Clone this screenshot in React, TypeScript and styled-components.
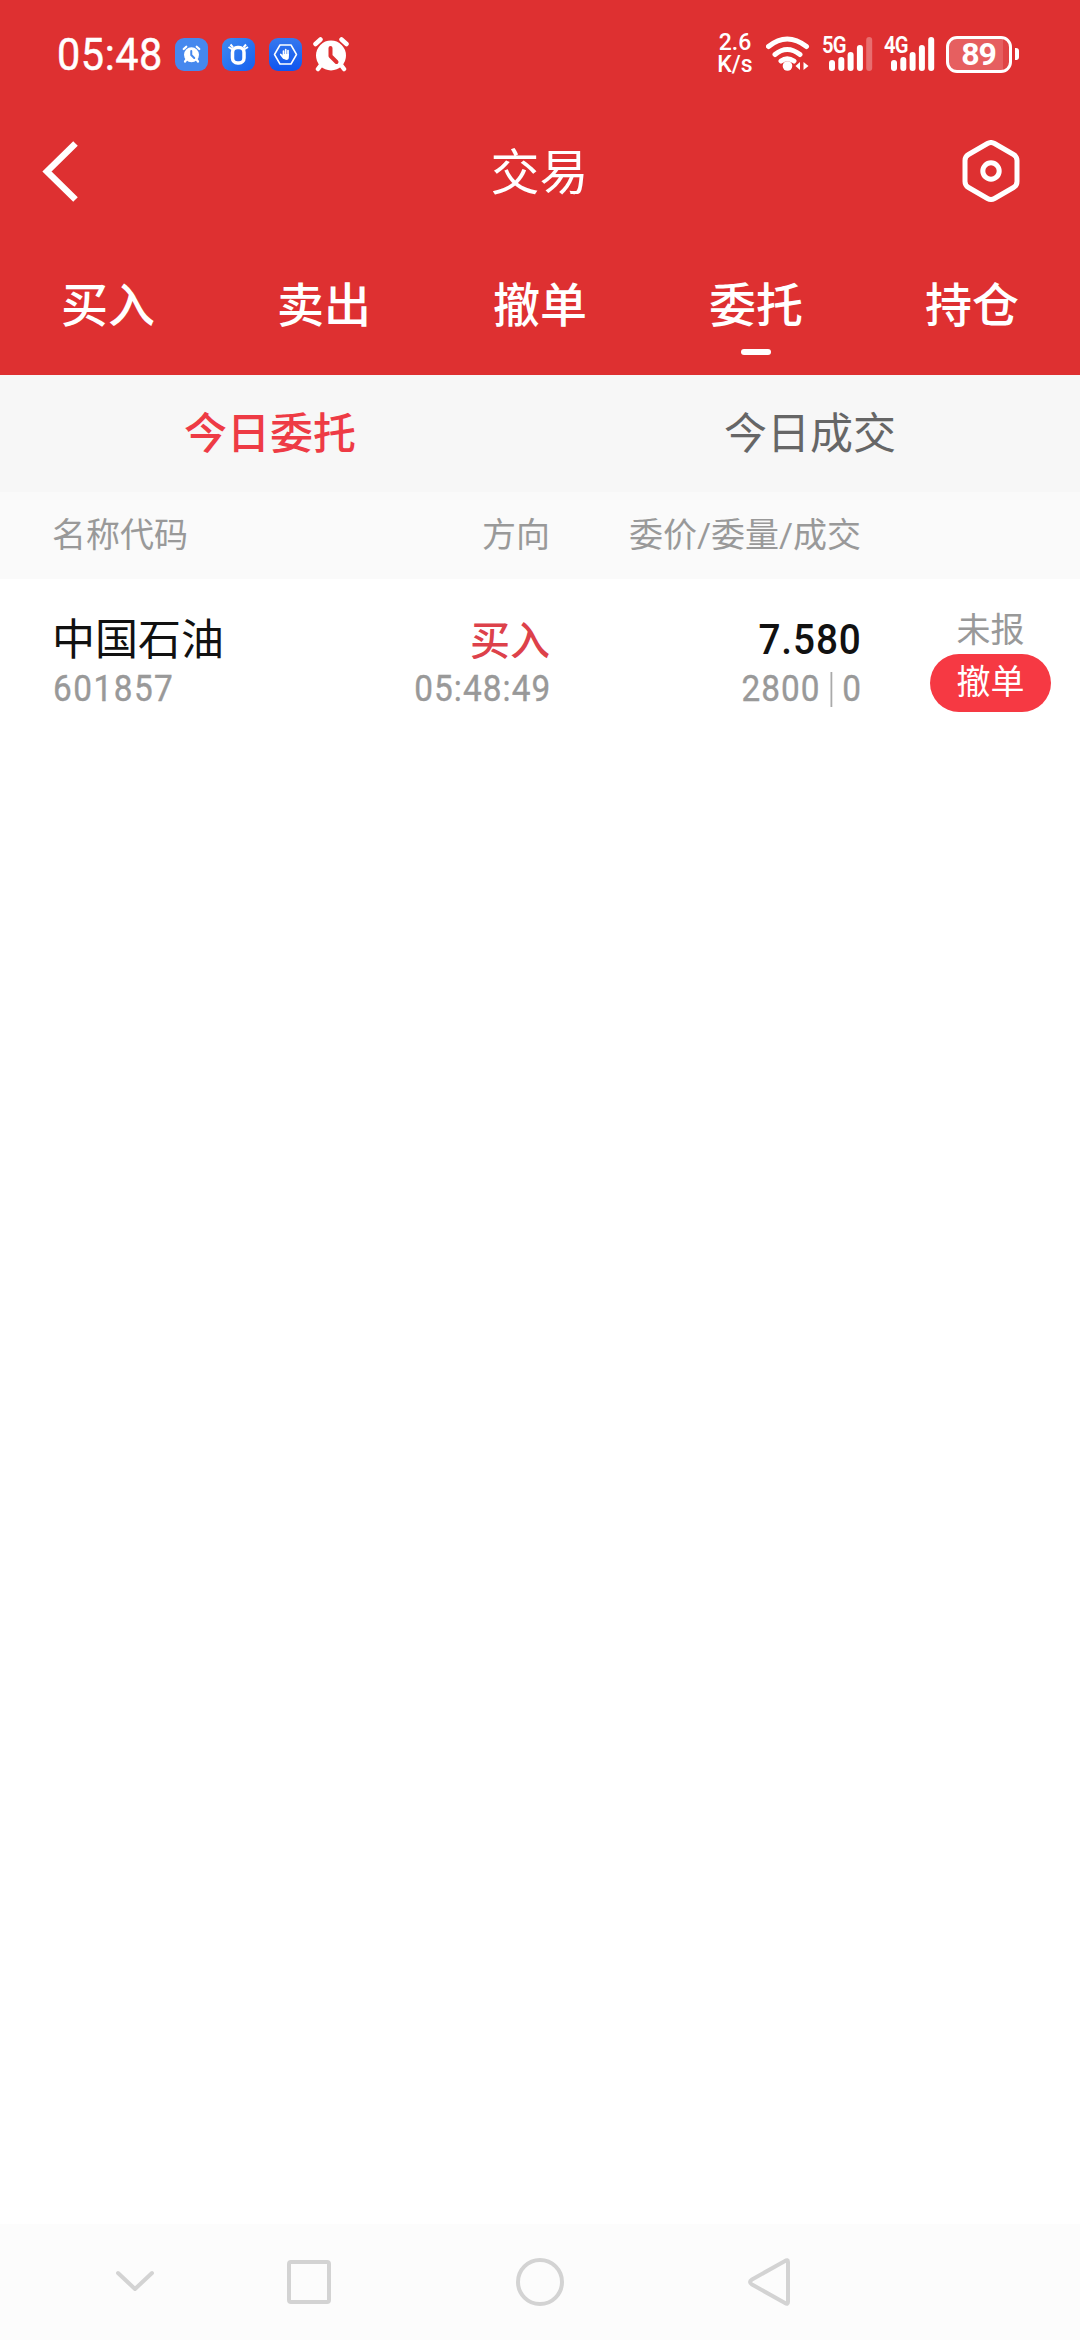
import React from 'react';
import styled, { createGlobalStyle } from 'styled-components';

const RED = '#de3031';
const CJK = "Roboto, 'Noto Sans CJK SC', sans-serif";

const Global = createGlobalStyle`
  * { box-sizing: border-box; }
  body { margin: 0; background: #fff; font-family: ${CJK}; }
  svg { display: block; flex: none; }
`;

const Screen = styled.div`
  width: 1080px;
  height: 2340px;
  display: flex;
  flex-direction: column;
  background: #fff;
  overflow: hidden;
`;

const Header = styled.header`
  height: 375px;
  background: ${RED};
  color: #fff;
  flex: none;
`;

const StatusBar = styled.div`
  height: 108px;
  padding: 0 61px 0 57px;
  display: flex;
  align-items: center;
`;

const Clock = styled.span`
  width: 118px;
  font-size: 45px;
  -webkit-text-stroke: 0.5px #fff;
  line-height: 54px;
  padding-top: 1px;
  letter-spacing: 0.6px;
  white-space: nowrap;
  transform: scaleX(0.92);
  transform-origin: left;
`;

const AppIcons = styled.div`
  display: flex;
  gap: 14px;
  margin-right: 11px;
`;

const StatusRight = styled.div`
  margin-left: auto;
  display: flex;
  align-items: center;
`;

const Speed = styled.div`
  width: 36px;
  margin-right: 13px;
  font-size: 23px;
  font-weight: 500;
  line-height: 22px;
  text-align: center;
  white-space: nowrap;
`;

const Signal = styled.div`
  display: flex;
  width: 62px;
  height: 34px;
  font-size: 23px;
  line-height: 17px;
  font-weight: 600;
  letter-spacing: -1px;
`;

const Bars = styled.svg`
  margin-left: -18px;
`;

const Network = styled.span`
  width: 25px;
  flex: none;
  display: inline-block;
  transform: scaleX(0.88);
  transform-origin: left;
  height: 17px;
`;

const Battery = styled.div`
  width: 66px;
  height: 37px;
  border: 3px solid #fff;
  border-radius: 11px;
  display: flex;
  align-items: center;
  justify-content: center;
  font-size: 32px;
  font-weight: 700;
  line-height: 31px;
  letter-spacing: -1px;
  padding-right: 1px;
  background: linear-gradient(90deg, #e65f60 0 54px, #e04445 54px);
`;

const BatteryTip = styled.div`
  width: 4px;
  height: 12px;
  margin-left: 3px;
  border-radius: 0 3px 3px 0;
  background: #fff;
`;

const TitleBar = styled.div`
  height: 127px;
  padding: 0 61px 0 41px;
  display: grid;
  grid-template-columns: 57px 1fr 57px;
  align-items: center;
`;

const Title = styled.h1`
  margin: 0;
  text-align: center;
  font-size: 49px;
  font-weight: 400;
  line-height: 60px;
  padding: 5px 0 0 19px;
`;

const Tabs = styled.nav`
  height: 140px;
  display: grid;
  grid-template-columns: repeat(5, 1fr);
`;

const Tab = styled.div<{ $active?: boolean }>`
  display: flex;
  flex-direction: column;
  align-items: center;
  padding-top: 36px;
  font-size: 47px;
  font-weight: 500;
  line-height: 70px;
  &::after {
    content: '';
    width: 30px;
    height: 6px;
    margin-top: 8px;
    border-radius: 3px;
    background: ${(p) => (p.$active ? '#fff' : 'transparent')};
  }
`;

const SubTabs = styled.div`
  height: 117px;
  flex: none;
  display: grid;
  grid-template-columns: 1fr 1fr;
  background: #f7f7f7;
`;

const SubTab = styled.div<{ $active?: boolean }>`
  text-align: center;
  font-size: 43px;
  line-height: 118px;
  font-weight: ${(p) => (p.$active ? 500 : 400)};
  color: ${(p) => (p.$active ? '#ee3b45' : '#666')};
`;

const Grid = styled.div`
  display: grid;
  grid-template-columns: 249px 249px 311px 1fr;
  padding: 0 29px 0 52px;
  flex: none;
`;

const TableHead = styled(Grid)`
  height: 87px;
  background: #fafafa;
  color: #999;
  font-size: 34px;
  line-height: 86px;
`;

const HeadCell = styled.div<{ $right?: boolean }>`
  text-align: ${(p) => (p.$right ? 'right' : 'left')};
  white-space: nowrap;
`;

const OrderRow = styled(Grid)`
  padding-top: 30px;
`;

const Cell = styled.div<{ $right?: boolean }>`
  display: flex;
  flex-direction: column;
  align-items: ${(p) => (p.$right ? 'flex-end' : 'flex-start')};
`;

const Name = styled.div`
  font-size: 43px;
  line-height: 62px;
  height: 58px;
  color: #111;
`;

const Direction = styled.div`
  font-size: 40px;
  line-height: 66px;
  height: 58px;
  font-weight: 500;
  color: #dd414a;
`;

const Price = styled.div`
  font-size: 43px;
  line-height: 60px;
  height: 58px;
  font-weight: 500;
  letter-spacing: 1px;
  margin-right: -1px;
  transform: scaleX(0.9);
  transform-origin: right;
  color: #111;
`;

const Sub = styled.div<{ $right?: boolean }>`
  display: flex;
  align-items: center;
  font-size: 37px;
  -webkit-text-stroke: 0.4px #999;
  line-height: 44px;
  height: 44px;
  letter-spacing: ${(p) => (p.$right ? 1.2 : 1.7)}px;
  margin-right: -1px;
  padding-left: ${(p) => (p.$right ? 0 : 1)}px;
  transform: scaleX(0.9);
  transform-origin: ${(p) => (p.$right ? 'right' : 'left')};
  color: #999;
`;

const Divider = styled.i`
  width: 2px;
  height: 35px;
  margin: 0 11px 0 11px;
  background: #aaa;
`;

const ActionCell = styled.div`
  display: flex;
  flex-direction: column;
  align-items: flex-end;
`;

const State = styled.div`
  width: 121px;
  text-align: center;
  font-size: 34px;
  line-height: 43px;
  height: 45px;
  color: #999;
`;

const CancelButton = styled.button`
  width: 121px;
  height: 58px;
  padding: 0 0 2px;
  border: 0;
  border-radius: 29px;
  background: #f63943;
  color: #fff;
  font: 400 34px/54px ${CJK};
`;

const Body = styled.main`
  flex: 1;
`;

const NavBar = styled.footer`
  height: 116px;
  flex: none;
  background: #fcfcfc;
  padding: 0 288px 0 114px;
  display: flex;
  align-items: center;
`;

const NavIcon = styled.svg<{ $gap?: number }>`
  fill: none;
  stroke: #d3d3d3;
  stroke-width: 4;
  stroke-linecap: round;
  stroke-linejoin: round;
  margin-left: ${(p) => p.$gap ?? 0}px;
`;

const AlarmShape = ({ hand }: { hand: string }) => (
  <>
    <circle cx="18" cy="18.500" r="15" fill="#fff" />
    <path d="M2.500 7 L7.500 2.500 M33.500 7 L28.500 2.500" stroke="#fff" strokeWidth="4.500" strokeLinecap="round" fill="none" />
    <path d="M8 28 L5 32 M28 28 L31 32" stroke="#fff" strokeWidth="4.500" strokeLinecap="round" fill="none" />
    <path d="M17.500 11 V19 L23.500 25" stroke={hand} strokeWidth="4" strokeLinecap="round" strokeLinejoin="round" fill="none" />
  </>
);

const SignalBars = ({ weak }: { weak?: boolean }) => (
  <Bars width="44" height="34" viewBox="0 0 44 34" fill="#fff">
    <rect x="0" y="23" width="6" height="11" rx="3" />
    <rect x="9.3" y="20" width="6" height="14" rx="3" />
    <rect x="18.6" y="15" width="6" height="19" rx="3" />
    <rect x="27.9" y="8" width="6" height="26" rx="3" />
    <rect x="37.2" y="0" width="6" height="34" rx="3" opacity={weak ? 0.3 : 1} />
  </Bars>
);

const tabs = ['买入', '卖出', '撤单', '委托', '持仓'];

export default function App() {
  return (
    <Screen>
      <Global />
      <Header>
        <StatusBar>
          <Clock>05:48</Clock>
          <AppIcons>
            <svg width="33" height="33" viewBox="0 0 33 33">
              <rect width="33" height="33" rx="9" fill="#4688ee" />
              <g transform="translate(7.5 7.5) scale(.5)"><AlarmShape hand="#4688ee" /></g>
            </svg>
            <svg width="33" height="33" viewBox="0 0 33 33">
              <defs>
                <linearGradient id="b" x1="0" y1="0" x2="1" y2="1">
                  <stop offset="0" stopColor="#3e8af0" /><stop offset="1" stopColor="#1560ef" />
                </linearGradient>
              </defs>
              <rect width="33" height="33" rx="9" fill="url(#b)" />
              <rect x="10.500" y="9.500" width="11.500" height="15.500" rx="5" fill="none" stroke="#fff" strokeWidth="3.500" />
              <path d="M6.500 9 L10.500 11.500 M8.500 6.500 L11 9.500 M26 9 L22 11.500 M24 6.500 L21.500 9.500" stroke="#fff" strokeWidth="2" />
            </svg>
            <svg width="33" height="33" viewBox="0 0 33 33">
              <defs>
                <linearGradient id="c" x1="0" y1="0" x2="0" y2="1">
                  <stop offset="0" stopColor="#3678ee" /><stop offset="1" stopColor="#0e55ef" />
                </linearGradient>
              </defs>
              <rect width="33" height="33" rx="9" fill="url(#c)" />
              <path d="M11 7 H22 L27.500 16.500 L22 26 H11 L5.500 16.500 Z" fill="none" stroke="#fff" strokeWidth="1.500" strokeLinejoin="round" />
              <path d="M14.500 17 V13 M16.700 17 V11.500 M19 17 V12.500 M11.800 16.500 L14.500 20" stroke="#fff" strokeWidth="1.700" strokeLinecap="round" />
              <path d="M13.700 16 H19.900 V19 Q19.900 22 17.300 22 Q14.800 22 13.500 19 Z" fill="#fff" />
            </svg>
          </AppIcons>
          <svg width="36" height="35" viewBox="0 0 36 35"><AlarmShape hand={RED} /></svg>
          <StatusRight>
            <Speed>2.6<br />K/s</Speed>
            <svg width="56" height="36" viewBox="0 0 56 36" fill="none" stroke="#fff" strokeWidth="5" strokeLinecap="round">
              <path d="M2.500 10.500 Q21 -4.500 40.500 10.500 M9 18.500 Q21 8.500 34 18.500 M15 25 Q21 20.500 28 25" />
              <circle cx="21.500" cy="30" r="4.800" fill="#fff" stroke="none" />
              <path d="M34 26 V34 L29.500 30 Z M37.500 26 V34 L42.500 30 Z" fill="#fff" stroke="none" />
            </svg>
            <Signal><Network>5G</Network><SignalBars weak /></Signal>
            <Signal><Network>4G</Network><SignalBars /></Signal>
            <Battery>89</Battery>
            <BatteryTip />
          </StatusRight>
        </StatusBar>
        <TitleBar>
          <svg width="40" height="64" viewBox="0 0 40 64" fill="none" stroke="#fff" strokeWidth="6.500">
            <path d="M34.500 3.500 L6 31.500 L34.500 59.500" />
          </svg>
          <Title>交易</Title>
          <svg width="58" height="64" viewBox="0 0 58 64" fill="none" stroke="#fff" strokeWidth="5">
            <path d="M25.500 3.500 Q29 1.500 32.500 3.500 L51.500 14.500 Q55 16.500 55 20.500 V41.500 Q55 45.500 51.500 47.500 L32.500 58.500 Q29 60.500 25.500 58.500 L6.500 47.500 Q3 45.500 3 41.500 V20.500 Q3 16.500 6.500 14.500 Z" />
            <circle cx="29" cy="31" r="8.200" />
          </svg>
        </TitleBar>
        <Tabs>
          {tabs.map((t) => <Tab key={t} $active={t === '委托'}>{t}</Tab>)}
        </Tabs>
      </Header>
      <SubTabs>
        <SubTab $active>今日委托</SubTab>
        <SubTab>今日成交</SubTab>
      </SubTabs>
      <TableHead>
        <HeadCell>名称代码</HeadCell>
        <HeadCell $right>方向</HeadCell>
        <HeadCell $right>委价/委量/成交</HeadCell>
      </TableHead>
      <Body>
        <OrderRow>
          <Cell>
            <Name>中国石油</Name>
            <Sub>601857</Sub>
          </Cell>
          <Cell $right>
            <Direction>买入</Direction>
            <Sub $right>05:48:49</Sub>
          </Cell>
          <Cell $right>
            <Price>7.580</Price>
            <Sub $right>2800<Divider />0</Sub>
          </Cell>
          <ActionCell>
            <State>未报</State>
            <CancelButton>撤单</CancelButton>
          </ActionCell>
        </OrderRow>
      </Body>
      <NavBar>
        <NavIcon width="42" height="26" viewBox="0 0 42 26"><path d="M4 4 L21 20 L38 4" /></NavIcon>
        <NavIcon $gap={131} width="44" height="44" viewBox="0 0 44 44"><rect x="2" y="2" width="40" height="40" rx="2" /></NavIcon>
        <NavIcon $gap={185} width="48" height="48" viewBox="0 0 48 48"><circle cx="24" cy="24" r="22" /></NavIcon>
        <NavIcon $gap={184} width="42" height="48" viewBox="0 0 42 48"><path d="M40 4 Q40 1 37 3 L4 21.500 Q0 24 4 26.500 L37 45 Q40 47 40 44 Z" /></NavIcon>
      </NavBar>
    </Screen>
  );
}
